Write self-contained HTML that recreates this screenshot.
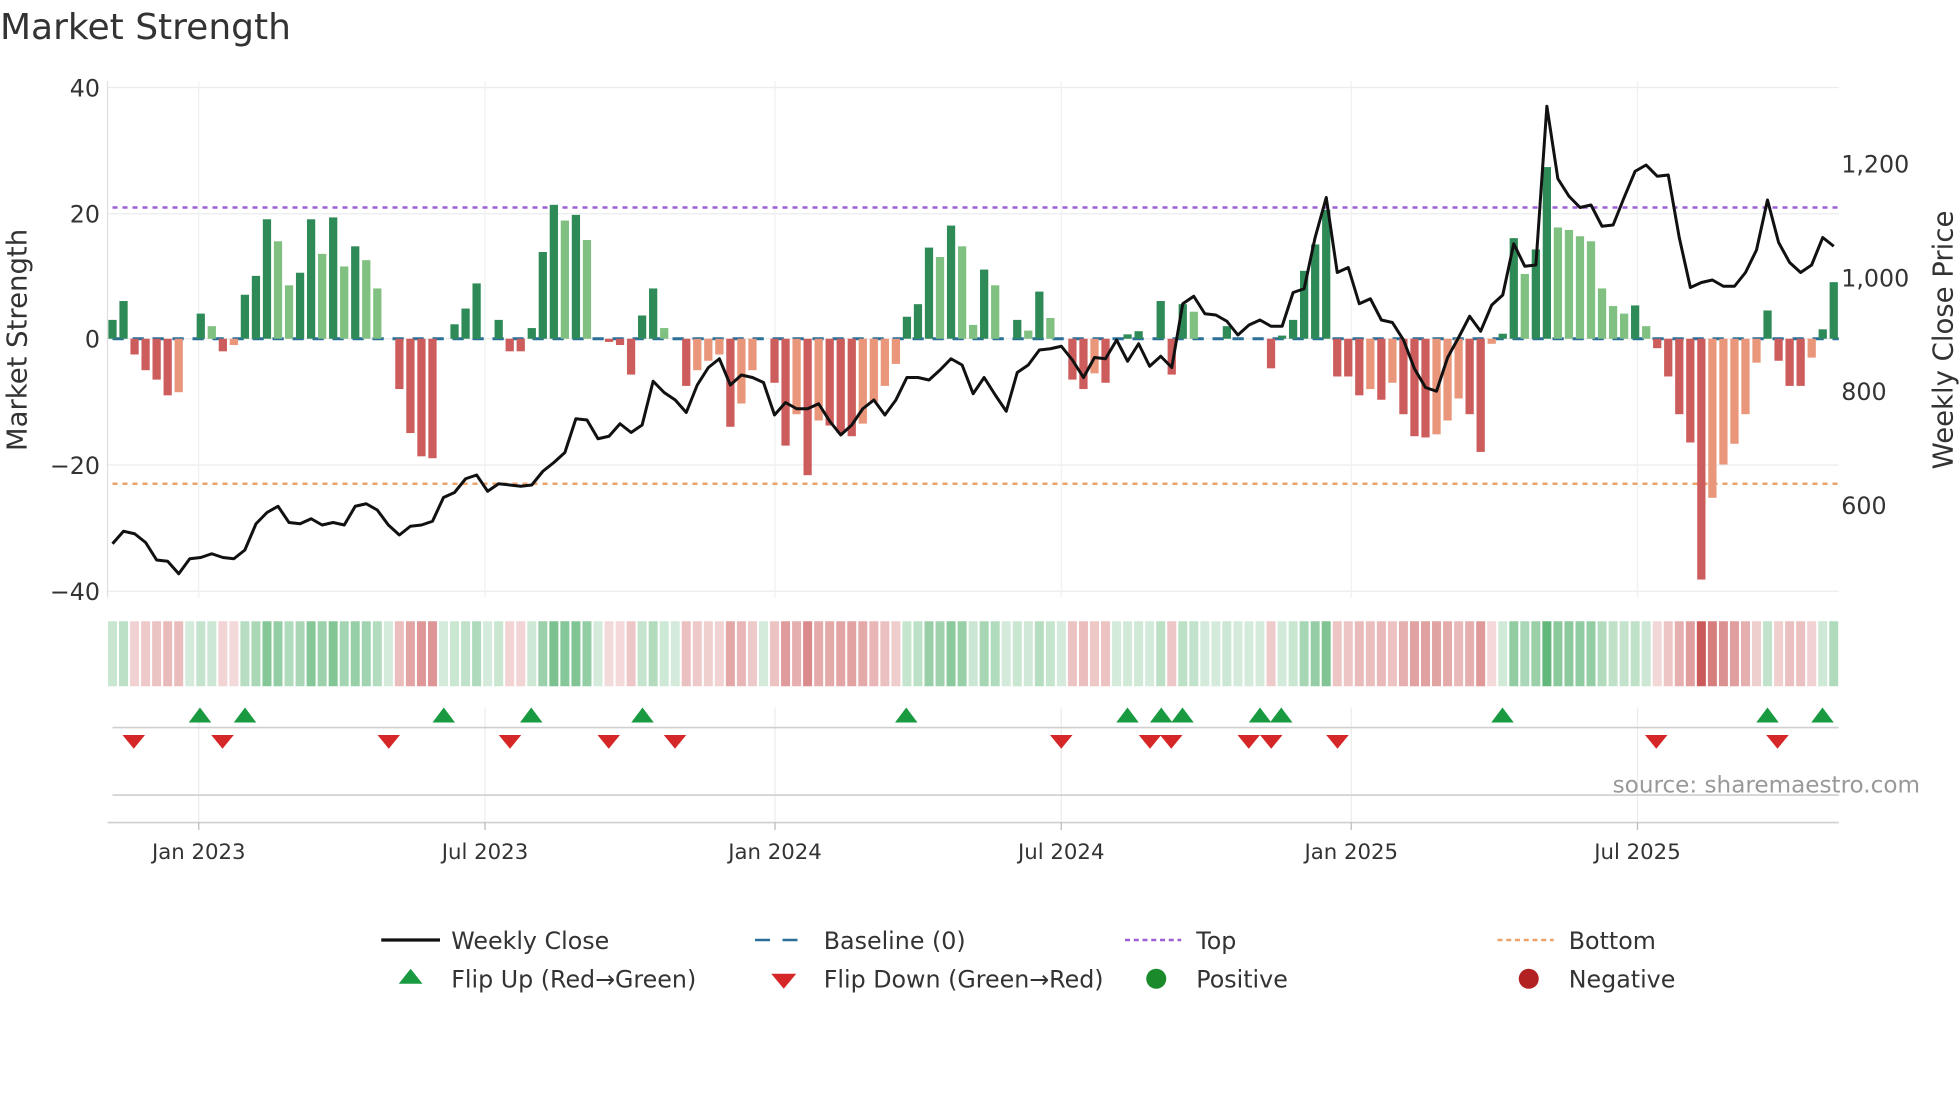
<!DOCTYPE html>
<html><head><meta charset="utf-8"><style>
html,body{margin:0;padding:0;background:#fff;overflow:hidden}
svg{display:block}
text{font-family:"DejaVu Sans","Liberation Sans",sans-serif}
</style></head><body>
<svg id="s" width="1960" height="1102" viewBox="0 0 1568 881.6" xmlns="http://www.w3.org/2000/svg">
<text x="0" y="31" font-size="28.8" fill="#333">Market Strength</text>
</svg>
<script>
var V=[3,6,-2.5,-5,-6.5,-9,-8.5,0,4,2,-2,-1,7,10,19,15.5,8.5,10.5,19,13.5,19.3,11.5,14.7,12.5,8,0,-8,-15,-18.7,-19,0,2.3,4.8,8.8,0,3,-2,-2,1.7,13.8,21.3,18.8,19.7,15.7,0,-0.5,-1,-5.7,3.7,8,1.7,0,-7.5,-5,-3.5,-2.5,-14,-10.3,-5,0,-7,-17,-12,-21.7,-13,-13.8,-15,-15.5,-13.5,-10,-7.5,-4,3.5,5.5,14.5,13,18,14.7,2.2,11,8.5,0,3,1.3,7.5,3.3,0,-6.5,-8,-5.5,-7,0,0.7,1.2,0,6,-5.7,5.5,4.3,0,0,2,0,0,0,-4.7,0.5,3,10.8,15,20.5,-6,-6,-9,-8,-9.7,-7,-12,-15.5,-15.7,-15.2,-13,-9.5,-12,-18,-0.8,0.8,16,10.3,14.2,27.3,17.7,17.3,16.3,15.5,8,5.2,4,5.3,2,-1.5,-6,-12,-16.5,-38.3,-25.3,-20,-16.7,-12,-3.8,4.5,-3.5,-7.5,-7.5,-3,1.5,9];
var P=[435,425,427,434,448,449,459,447,446,443,446,447,440,419,410,405,418,419,415,420,418,420,405,403,408,420,428,421,420,417,398,394,383,380,393,387,388,389,388,377,370,362,335,336,351,349,339,346,340,305,314,320,330,308,294,287,308,300,302,306,332,322,327,327,323,337,348,340,327,320,332,320,302,302,304,296,287,292,315,302,316,329,298,292,280,279,277,288,302,286,287,272,289,275,293,285,294,243,237,251,252,257,268,260,256,261,261,234,231,190,158,218,214,243,239,256,258,272,295,310,313,286,270,253,265,244,236,195,213,212,85,143,157,166,164,181,180,158,137,132,141,140,190,230,226,224,229,229,218,200,160,194,210,218,212,190,197];
var n=V.length,x0=90,x1=1467,dx=(x1-x0)/(n-1);
function X(i){return x0+i*dx}
var o='';
[70,171,271,372,473].forEach(function(y){o+='<line x1="86" x2="1471" y1="'+y+'" y2="'+y+'" stroke="#ececec" stroke-width="1"/>'});
[159,388,620,849,1081,1310].forEach(function(x){o+='<line x1="'+x+'" x2="'+x+'" y1="65" y2="478" stroke="#f0f0f0"/><line x1="'+x+'" x2="'+x+'" y1="566" y2="658" stroke="#ececec"/>'});
o+='<line x1="86" x2="86" y1="65" y2="478" stroke="#e0e0e0"/>';
o+='<line x1="90" x2="1471" y1="166" y2="166" stroke="#9b5fd6" stroke-width="2" stroke-dasharray="4,4"/>';
o+='<line x1="90" x2="1471" y1="387" y2="387" stroke="#eda26b" stroke-width="2" stroke-dasharray="4,4"/>';
o+='<line x1="90" x2="1471" y1="271" y2="271" stroke="#2a6f97" stroke-width="2.4" stroke-dasharray="9,7"/>';
var bw=6.6;
for(var i=0;i<n;i++){var v=V[i];if(v==0)continue;var pv=i?V[i-1]:0;var light=(pv*v>0&&Math.abs(v)<Math.abs(pv));
var c=v>0?(light?'#80c080':'#2e8b57'):(light?'#e9967a':'#cd5c5c');
var h=Math.abs(v)*5.03,y=v>0?271-h:271;
o+='<rect x="'+(X(i)-bw/2)+'" y="'+y+'" width="'+bw+'" height="'+h+'" fill="'+c+'"/>';}
var pts=P.map(function(y,i){return X(i).toFixed(1)+','+y}).join(' ');
o+='<polyline points="'+pts+'" fill="none" stroke="#111" stroke-width="2.4" stroke-linejoin="round"/>';
for(var i=0;i<n;i++){var v=V[i],t=Math.min(1,Math.abs(v)/28);var c;
if(v>=0){var a=0.22+0.6*t;c='rgba(60,165,90,'+a+')';}else{var a=0.2+0.75*Math.min(1,Math.abs(v)/35);c='rgba(200,80,80,'+a+')';}
o+='<rect x="'+(X(i)-3.6)+'" y="497" width="7.2" height="52" fill="'+c+'"/>';}
o+='<line x1="90" x2="1471" y1="582" y2="582" stroke="#cfcfcf" stroke-width="1.3"/>';
o+='<line x1="90" x2="1471" y1="636" y2="636" stroke="#cfcfcf" stroke-width="1.3"/>';
o+='<line x1="86" x2="1471" y1="658" y2="658" stroke="#cfcfcf" stroke-width="1.3"/>';
[160,196,355,425,514,725,902,929,946,1008,1025,1202,1414,1458].forEach(function(x){o+='<polygon points="'+(x-9)+',578 '+(x+9)+',578 '+x+',566" fill="#1a9a40"/>'});
[107,178,311,408,487,540,849,920,937,999,1017,1070,1325,1422].forEach(function(x){o+='<polygon points="'+(x-9)+',588 '+(x+9)+',588 '+x+',599" fill="#d62728"/>'});
o+='<text x="1536" y="634" font-size="18.5" fill="#999" text-anchor="end">source: sharemaestro.com</text>';
[['40',70],['20',171],['0',271],['\u221220',372],['\u221240',473]].forEach(function(a){o+='<text x="80" y="'+(a[1]+7)+'" font-size="19" fill="#333" text-anchor="end">'+a[0]+'</text>'});
[['1,200',131],['1,000',222],['800',313],['600',404]].forEach(function(a){o+='<text x="1473" y="'+(a[1]+7)+'" font-size="19" fill="#333">'+a[0]+'</text>'});
[['Jan 2023',159],['Jul 2023',388],['Jan 2024',620],['Jul 2024',849],['Jan 2025',1081],['Jul 2025',1310]].forEach(function(a){o+='<line x1="'+a[1]+'" x2="'+a[1]+'" y1="658" y2="664" stroke="#bbb"/><text x="'+a[1]+'" y="687" font-size="17" fill="#333" text-anchor="middle">'+a[0]+'</text>'});
o+='<text transform="translate(21,272) rotate(-90)" font-size="22" fill="#333" text-anchor="middle">Market Strength</text>';
o+='<text transform="translate(1562,272) rotate(-90)" font-size="22" fill="#333" text-anchor="middle">Weekly Close Price</text>';
var fs=19;
o+='<line x1="305" x2="352" y1="752" y2="752" stroke="#111" stroke-width="2.6"/><text x="361" y="759" font-size="'+fs+'" fill="#333">Weekly Close</text>';
o+='<line x1="604" x2="648" y1="752" y2="752" stroke="#2a6f97" stroke-width="2" stroke-dasharray="12,10"/><text x="659" y="759" font-size="'+fs+'" fill="#333">Baseline (0)</text>';
o+='<line x1="900" x2="945" y1="752" y2="752" stroke="#9b5fd6" stroke-width="2" stroke-dasharray="4,3"/><text x="957" y="759" font-size="'+fs+'" fill="#333">Top</text>';
o+='<line x1="1198" x2="1243" y1="752" y2="752" stroke="#eda26b" stroke-width="2" stroke-dasharray="4,3"/><text x="1255" y="759" font-size="'+fs+'" fill="#333">Bottom</text>';
o+='<polygon points="319,787 338,787 328.5,775" fill="#1a9a40"/><text x="361" y="790" font-size="'+fs+'" fill="#333">Flip Up (Red\u2192Green)</text>';
o+='<polygon points="617,779 637,779 627,791" fill="#d62728"/><text x="659" y="790" font-size="'+fs+'" fill="#333">Flip Down (Green\u2192Red)</text>';
o+='<circle cx="925" cy="783" r="8" fill="#1a8a2a"/><text x="957" y="790" font-size="'+fs+'" fill="#333">Positive</text>';
o+='<circle cx="1223" cy="783" r="8" fill="#b22222"/><text x="1255" y="790" font-size="'+fs+'" fill="#333">Negative</text>';
document.getElementById('s').insertAdjacentHTML('beforeend',o);
</script>
</body></html>
